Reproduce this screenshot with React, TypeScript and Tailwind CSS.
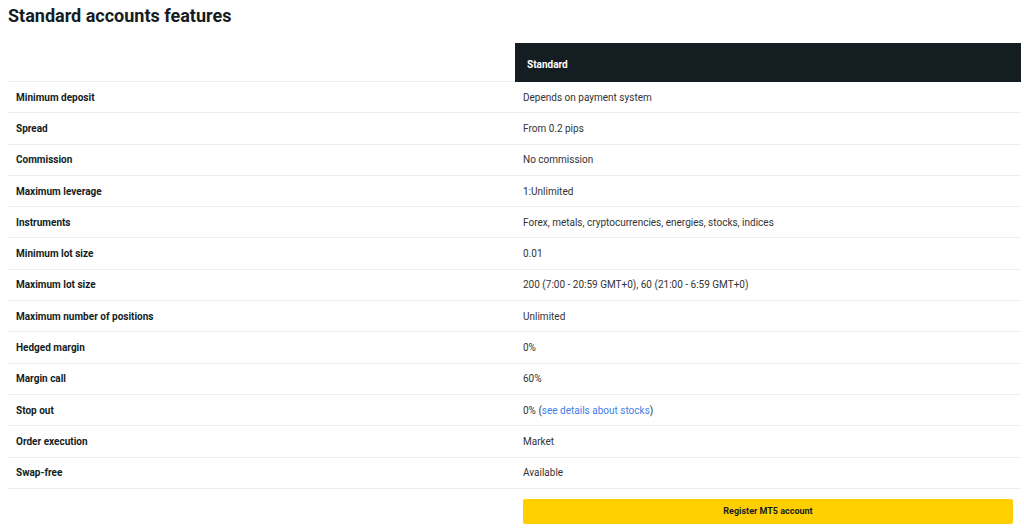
const rows: [string, React.ReactNode][] = [
  ["Minimum deposit", "Depends on payment system"],
  ["Spread", "From 0.2 pips"],
  ["Commission", "No commission"],
  ["Maximum leverage", "1:Unlimited"],
  ["Instruments", "Forex, metals, cryptocurrencies, energies, stocks, indices"],
  ["Minimum lot size", "0.01"],
  ["Maximum lot size", "200 (7:00 - 20:59 GMT+0), 60 (21:00 - 6:59 GMT+0)"],
  ["Maximum number of positions", "Unlimited"],
  ["Hedged margin", "0%"],
  ["Margin call", "60%"],
  [
    "Stop out",
    <>
      0% (<a className="text-[#3f7ee8]">see details about stocks</a>)
    </>,
  ],
  ["Order execution", "Market"],
  ["Swap-free", "Available"],
];

export default function App() {
  return (
    <div className="min-h-[529px] bg-white pl-2 pr-[6px] font-[Roboto,sans-serif] text-[#141d22]">
      <h1 className="pt-[5px] text-[18px] font-bold leading-[22px]">Standard accounts features</h1>
      <div className="mt-4 grid grid-cols-[507px_1fr]">
        <div className="border-b border-[#eeeeee]" />
        <div className="flex h-[39px] items-center bg-[#141d22] px-3 pt-1 text-[10px] font-bold text-white">
          Standard
        </div>
        {rows.map(([k, v]) => (
          <div key={k} className="contents">
            <div className="flex h-[31.3px] items-center border-b border-[#eeeeee] px-2 text-[10px] font-bold">
              {k}
            </div>
            <div className="flex h-[31.3px] items-center border-b border-[#eeeeee] px-2 text-[10px] text-[#333]">
              {v}
            </div>
          </div>
        ))}
        <div />
        <div className="px-2 pt-[8px]">
          <button className="h-[25px] w-[490px] rounded-[2px] bg-[#ffcf00] text-[9px] font-bold">
            Register MT5 account
          </button>
        </div>
      </div>
    </div>
  );
}
